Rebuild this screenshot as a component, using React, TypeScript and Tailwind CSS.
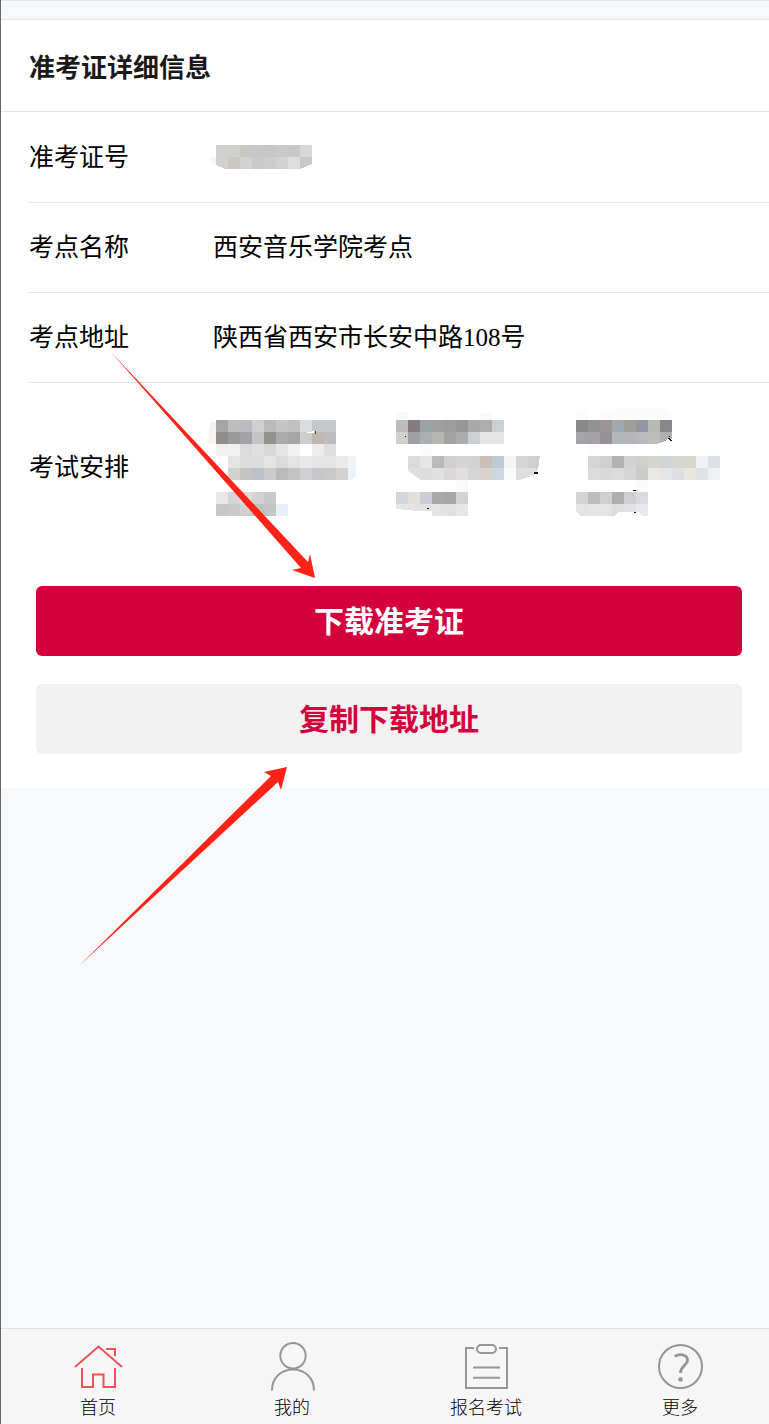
import type { ReactNode } from "react";

type MosaicProps = {
  label: string;
  width: number;
  height: number;
  cells: string[];
  children?: ReactNode;
};

// every row is a list of 12px blocks, "-" leaves a block empty
function Mosaic({ label, width, height, cells, children }: MosaicProps) {
  return (
    <svg
      role="img"
      aria-label={label}
      width={width}
      height={height}
      viewBox={`0 0 ${width} ${height}`}
      shapeRendering="crispEdges"
      className="shrink-0 overflow-visible"
    >
      {cells.map((row, y) =>
        row
          .split(" ")
          .map((color, x) =>
            color === "-" ? null : (
              <rect key={`${x}-${y}`} x={x * 12} y={y * 12} width={12} height={12} fill={`#${color}`} />
            )
          )
      )}
      {children}
    </svg>
  );
}

const numberCells = [
  "d0d0ce d0d0ce c8c7c3 c7c6c8 c6c6c6 c9c8ca c8c8c8 d8d8d9",
  "d3d1d0 c9c8c3 d3d3d3 cacaca cdcdcd d2d2d2 dedede c8c8c8",
];

const firstExam = [
  "a5a4a2 bdbebf b9bbc1 cfcfcf b9b9b9 c3c5c7 bfc0c2 dcdcdc c5c8ca c5c8ca",
  "8f8e8b 9a9a9b a2a3aa c5c5c5 92938c ababab a4a5a7 cdcdcd beb8b1 bcbcc2",
  "f0eeee f1f0f0 dadada e0e0e0 d8d8d8 e4e5e6 f2f2f2 - ececec dedede",
  "- e3e3e2 dcdcdc dadcdf e3e3e3 dadada e3e3e3 e9e9e8 e4e4e4 e3e3e3 ebebea",
  "- d2d1cf c4c4c4 bcc0c8 cbcbcb b9b9b8 c3c3c3 d0d0d0 c5c7ca c9c9c9 d3d2d0",
  "-",
  "e8e8e8 d6d6d6 dcdcdc d0d2d3 c8c8c8",
  "c6c6c6 c9c9c8 d0d0d0 bfbfbf c5c5c5 e9eff6",
];

const secondExam = [
  "bdbcba 867b7e 9aa3a8 a0a0a0 9e9d9b 959698 a9a9a8 adaeac cbd0d3",
  "d2d0cc a09fa2 aaaeb2 b8b6b3 a3a3a4 aaabac cdd0d0 e4e4e4 e5e5e5",
  "- - fbfbfb",
  "- dadada e6e6e6 b9b9b9 d2cfcf d4d4d4 d2d3d3 c9c0b3 bccad3 f5f5f5 d6d4d4 cfcfd0",
  "- dedede dcdcdc e0dfe1 dad8d9 dedede d6d6d6 d8d3cd cdd7de fafafa dedede dedede",
  "- - - - - f9f9f9",
  "d0d6db e3e0da ccccd6 a9a9a9 a7a5a6 d3d4d4",
  "e3e5e5 e3e3e3 e2e2e4 e3e3e3 e2e2e2 e6e6e6",
];

const thirdExam = [
  "8a8888 929295 9b9597 a0a8b0 a09f97 9496a0 b8b8b4 87878b",
  "a4a4a7 a3a2a6 969294 b4b8bb b5b6b8 b9b9bb bfbebb aeb0b6",
  "- fcfcfc",
  "- d5d5d5 cfcfcf b2b2b2 d2d2d2 cececa d5d5d0 d2d5d5 d5d5d3 d8d5cb eef2f4 dde1e5",
  "- dadada d9d9d9 dbdbdb d6d6d6 cccccc eae8e7 e3e6e9 dedfe2 e9e5df dfe2e6 edf1f4",
  "- - - - - fafafa",
  "d5d4d3 bdbdbd cfcfcf adadad cfcfd0 d9d9df",
  "e3e3e3 e5e5e6 e3e3e3 dededf e2e1e3 e8e8ec",
];

const navItems = [
  {
    label: "首页",
    color: "text-[#ee5253]",
    icon: (
      <>
        <path d="M2 25 25.5 4.5 49 25" />
        <path d="M33 7h9v7" />
        <path d="M9 26v19h11V32.5h10.5V45H42V26" />
      </>
    ),
  },
  {
    label: "我的",
    color: "text-[#969696]",
    icon: (
      <>
        <circle cx="26" cy="13.7" r="12.7" />
        <path d="M5 48.5C5 36 14 27.5 26 27.5S47 36 47 48.5" />
      </>
    ),
  },
  {
    label: "报名考试",
    color: "text-[#969696]",
    icon: (
      <>
        <path d="M13 6H5v40h41V6h-8" />
        <rect x="16" y="3" width="19" height="8" rx="4" />
        <path d="M12 25.5H39M12 35.7H39" />
      </>
    ),
  },
  {
    label: "更多",
    color: "text-[#969696]",
    icon: (
      <>
        <circle cx="25.5" cy="24.5" r="21.5" />
        <path d="M19.7 14.5C24 11.3 32.5 12 32.5 18.3C32.5 23.5 25.5 23.5 25.5 31" strokeWidth="2.8" />
        <circle cx="25.5" cy="37.5" r="2.3" fill="currentColor" stroke="none" />
      </>
    ),
  },
];

function Row({ label, children }: { label: string; children: ReactNode }) {
  return (
    <div className="flex min-h-[90px] items-center border-b border-[#e5e5e5]">
      <dt className="w-[184px] shrink-0">{label}</dt>
      <dd className="min-w-0 flex-1">{children}</dd>
    </div>
  );
}

export default function App() {
  return (
    <div className="relative flex min-h-screen flex-col overflow-x-hidden border-l border-[#666666] bg-[#f6f8fa] font-['Liberation_Serif','Noto_Sans_CJK_SC',sans-serif] text-black">
      <div className="h-5 border-y border-[#e5e6e8]" />

      <main className="bg-white pb-[34px]">
        <h1 className="flex h-[92px] items-center border-b border-[#e5e5e5] px-7 pt-1.5 text-[26px] font-bold text-[#1a1a1a]">
          准考证详细信息
        </h1>

        <dl className="pt-px pl-7 text-[25px] leading-9">
          <Row label="准考证号">
            <div className="pb-0.5 pl-[3px]">
              <Mosaic label="准考证号已隐藏" width={96} height={24} cells={numberCells}>
                <path d="M0 20v4h9zM84 24h12v-5z" fill="#fff" />
                <path d="M-6 12h6v8h-4z" fill="#f7f7f7" />
              </Mosaic>
            </div>
          </Row>
          <Row label="考点名称">西安音乐学院考点</Row>
          <Row label="考点地址">陕西省西安市长安中路108号</Row>
          <div className="flex min-h-[170px] items-center">
            <dt className="w-[184px] shrink-0">考试安排</dt>
            <dd className="flex min-w-0 flex-1 pl-[3px]">
              <Mosaic label="第一场考试已隐藏" width={180} height={96} cells={firstExam}>
                <path d="M-6 2h6v22h-8z" fill="#f5f3f3" />
                <path d="M132 36h8v20l-5 4h-3z" fill="#edf3f8" />
                <path d="M89 13l9-2v2z" fill="#fff" />
                <path d="M99 11h1v3h-1z" fill="#444" />
              </Mosaic>
              <Mosaic label="第二场考试已隐藏" width={180} height={96} cells={secondExam}>
                <path d="M0-8h12v8H0zM84-7h12v7H84z" fill="#fafafa" />
                <path d="M12 51v9h13zM124 60l14-5 4-5 2-14v24zM0 89v7h36v-5H22z" fill="#fff" />
                <path d="M138 52h4v2h-4zM9 16h1v1H9zM31 88h2v1h-2z" fill="#111" />
              </Mosaic>
              <Mosaic label="第三场考试已隐藏" width={180} height={96} cells={thirdExam}>
                <path d="M0-8l12-4v12H0zM24-7l16-5h48l8 7v5H24z" fill="#fbfbfb" />
                <path d="M80 24l9-3 3-3 4 1v5zM0 92v4h5zM38 96l4-4h20l4 4z" fill="#fff" />
                <path d="M93 16h1v1h-1zM91 18h2l3 2v1h-2zM57 70h3v1h-3zM58 92h2v1h-2z" fill="#111" />
              </Mosaic>
            </dd>
          </div>
        </dl>

        <div className="flex flex-col gap-7 pt-[33px] pr-[27px] pl-[35px] text-[30px] leading-9 font-bold">
          <button type="button" className="h-[70px] rounded-md bg-[#d4003e] pt-0.5 text-white">
            下载准考证
          </button>
          <button type="button" className="h-[70px] rounded-md bg-[#f1f1f1] pt-0.5 text-[#d4003e]">
            复制下载地址
          </button>
        </div>
      </main>

      <nav className="mt-auto -mr-2 grid h-24 grid-cols-4 border-t border-[#e0e1e3] bg-[#f6f6f6]">
        {navItems.map((item) => (
          <a key={item.label} href="#" className="flex flex-col items-center pt-[13px]">
            <svg
              width="50"
              height="50"
              viewBox="0 0 50 50"
              fill="none"
              stroke="currentColor"
              strokeWidth="2"
              className={item.color}
              aria-hidden="true"
            >
              {item.icon}
            </svg>
            <span className="text-[18px] leading-8 font-light">{item.label}</span>
          </a>
        ))}
      </nav>

      {/* Pointers to the two download actions */}
      <svg
        width="207"
        height="228"
        viewBox="0 0 207 228"
        fill="#ff2317"
        className="pointer-events-none absolute top-[351px] left-[109px]"
        aria-hidden="true"
      >
        <path d="M0 0 198 211 200 203 205 227 182 219 191 217Z" />
      </svg>
      <svg
        width="208"
        height="199"
        viewBox="0 0 208 199"
        fill="#ff2317"
        className="pointer-events-none absolute top-[767px] left-[79px]"
        aria-hidden="true"
      >
        <path d="M0 198 191 9 184 5 207 0 201 23 198 15Z" />
      </svg>
    </div>
  );
}
